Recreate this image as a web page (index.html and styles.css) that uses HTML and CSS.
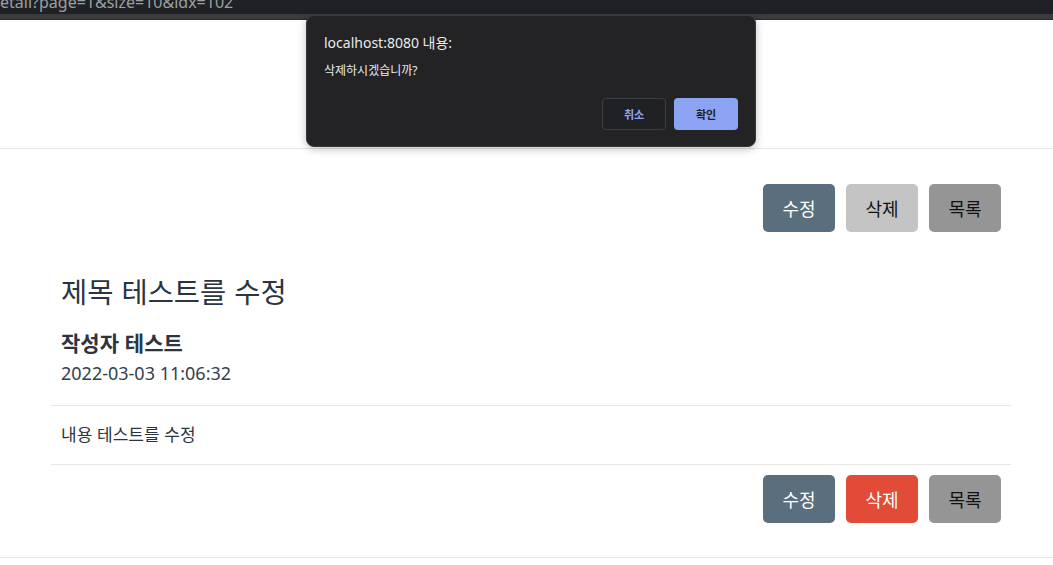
FILE: index.html
```html
<!DOCTYPE html>
<html lang="ko">
<head>
<meta charset="UTF-8">
<meta name="viewport" content="width=device-width, initial-scale=1.0">
<title>게시글 상세</title>
<link rel="stylesheet" href="styles.css">
</head>
<body>
<div class="browser-bar">
    <span class="url">etail?page=1&amp;size=10&amp;idx=102</span>
</div>
<div class="browser-edge"></div>

<div class="page-header"></div>

<div class="board">
    <div class="btn-row top">
        <button class="btn btn-edit">수정</button>
        <button class="btn btn-delete-off">삭제</button>
        <button class="btn btn-list">목록</button>
    </div>

    <div class="post-head">
        <h2 class="post-title">제목 테스트를 수정</h2>
        <div class="post-writer">작성자 테스트</div>
        <div class="post-date">2022-03-03 11:06:32</div>
    </div>

    <div class="post-body">내용 테스트를 수정</div>

    <div class="btn-row bottom">
        <button class="btn btn-edit">수정</button>
        <button class="btn btn-delete">삭제</button>
        <button class="btn btn-list">목록</button>
    </div>
</div>
<div class="page-footer"></div>

<!-- confirm() dialog drawn by the browser -->
<div class="confirm-dialog">
    <div class="confirm-title">localhost:8080 내용:</div>
    <div class="confirm-msg">삭제하시겠습니까?</div>
    <div class="confirm-btns">
        <button class="cbtn cbtn-cancel">취소</button>
        <button class="cbtn cbtn-ok">확인</button>
    </div>
</div>
</body>
</html>
```

FILE: styles.css
```css
body {
    margin: 0;
    padding: 0;
    background-color: #fff;
    font-family: "Noto Sans", "Noto Sans CJK KR", sans-serif;
    color: #2b3440;
}
.browser-bar {
    height: 14px;
    background-color: #202124;
    overflow: hidden;
    position: relative;
}
.browser-bar .url {
    position: absolute;
    left: 0;
    top: -9px;
    font-size: 16px;
    color: #9aa0a6;
    white-space: nowrap;
}
.browser-edge {
    height: 5px;
    background-color: #3a3b3f;
    border-bottom: 1px solid #2a2b2e;
}
.page-header {
    height: 128px;
    border-bottom: 1px solid #e6e6e6;
}
.board {
    width: 960px;
    margin-left: 51px;
    padding-top: 35px;
}
.btn-row {
    display: flex;
    justify-content: flex-end;
    gap: 11px;
    padding-right: 10px;
}
.btn-row.bottom {
    padding-top: 10px;
    padding-bottom: 34px;
}
.btn {
    width: 72px;
    height: 48px;
    border: none;
    border-radius: 5px;
    font-family: "Noto Sans CJK KR", sans-serif;
    font-size: 18px;
    color: #111;
    padding: 0;
}
.btn-edit {
    background-color: #5b6e7e;
    color: #fff;
}
.btn-delete-off {
    background-color: #c4c4c4;
}
.btn-delete {
    background-color: #e24b37;
    color: #fff;
}
.btn-list {
    background-color: #959595;
}
.post-head {
    padding: 39px 10px 19px;
    border-bottom: 1px solid #e6e6e6;
}
.post-title {
    margin: 0;
    font-family: "Noto Sans CJK KR", sans-serif;
    font-size: 28.5px;
    font-weight: 400;
    line-height: 40px;
}
.post-writer {
    margin-top: 17px;
    font-family: "Noto Sans CJK KR", sans-serif;
    font-size: 21px;
    font-weight: 700;
    line-height: 28px;
}
.post-date {
    margin-top: 4px;
    font-size: 18px;
    line-height: 26px;
    color: #34404d;
}
.post-body {
    padding: 15px 10px 17px;
    font-family: "Noto Sans CJK KR", sans-serif;
    font-size: 17px;
    line-height: 26px;
    border-bottom: 1px solid #e6e6e6;
}
.page-footer {
    border-top: 1px solid #e6e6e6;
}
.confirm-dialog {
    position: absolute;
    left: 306px;
    top: 15px;
    width: 414px;
    height: 98px;
    padding: 17px 17px 15px;
    background-color: #232325;
    border: 1px solid #3a3a3c;
    border-radius: 8px;
    box-shadow: 0 2px 8px rgba(0, 0, 0, 0.25);
    font-family: "Noto Sans", "Noto Sans CJK KR", sans-serif;
    color: #e8eaed;
}
.confirm-title {
    font-size: 14px;
    line-height: 20px;
}
.confirm-msg {
    margin-top: 9px;
    font-size: 12px;
    line-height: 18px;
}
.confirm-btns {
    display: flex;
    justify-content: flex-end;
    gap: 8px;
    margin-top: 18px;
}
.cbtn {
    width: 64px;
    height: 32px;
    border-radius: 4px;
    font-family: "Noto Sans CJK KR", sans-serif;
    font-size: 11px;
    font-weight: 700;
    padding: 0;
}
.cbtn-cancel {
    background-color: #202124;
    border: 1px solid #3c3d40;
    color: #8ea3f2;
}
.cbtn-ok {
    background-color: #8ca3f4;
    border: none;
    color: #202124;
}
```
